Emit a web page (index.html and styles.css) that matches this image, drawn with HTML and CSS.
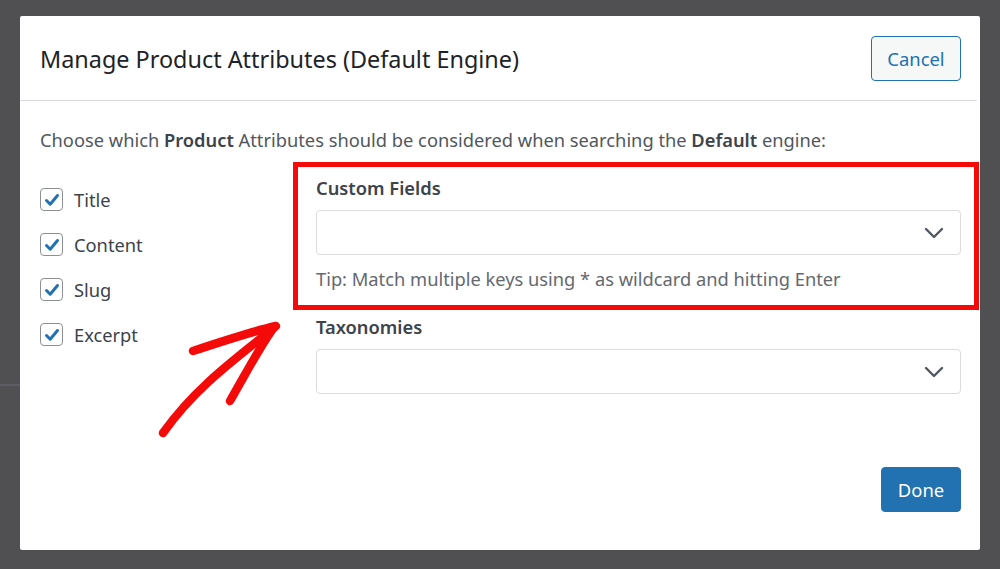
FILE: index.html
```html
<!DOCTYPE html>
<html>
<head>
<meta charset="utf-8">
<link rel="stylesheet" href="styles.css">
</head>
<body>
<div class="backdrop-line"></div>
<div class="modal">
  <div class="modal-header">
    <h1 class="modal-title">Manage Product Attributes (Default Engine)</h1>
    <button class="btn btn-secondary">Cancel</button>
  </div>
  <div class="modal-body">
    <p class="intro">Choose which <strong>Product</strong> Attributes should be considered when searching the <strong>Default</strong> engine:</p>
    <div class="columns">
      <ul class="checks">
        <li><span class="cb"><svg viewBox="0 0 20 20" width="20" height="20"><path d="M4.5 10.5 L8.2 14.2 L15.5 5.5" fill="none" stroke="#2271b1" stroke-width="3" stroke-linecap="round" stroke-linejoin="round"/></svg></span>Title</li>
        <li><span class="cb"><svg viewBox="0 0 20 20" width="20" height="20"><path d="M4.5 10.5 L8.2 14.2 L15.5 5.5" fill="none" stroke="#2271b1" stroke-width="3" stroke-linecap="round" stroke-linejoin="round"/></svg></span>Content</li>
        <li><span class="cb"><svg viewBox="0 0 20 20" width="20" height="20"><path d="M4.5 10.5 L8.2 14.2 L15.5 5.5" fill="none" stroke="#2271b1" stroke-width="3" stroke-linecap="round" stroke-linejoin="round"/></svg></span>Slug</li>
        <li><span class="cb"><svg viewBox="0 0 20 20" width="20" height="20"><path d="M4.5 10.5 L8.2 14.2 L15.5 5.5" fill="none" stroke="#2271b1" stroke-width="3" stroke-linecap="round" stroke-linejoin="round"/></svg></span>Excerpt</li>
      </ul>
      <div class="fields">
        <div class="field">
          <label class="field-label">Custom Fields</label>
          <div class="select"><svg class="chev" viewBox="0 0 20 12" width="20" height="12"><path d="M2 2 L10 10 L18 2" fill="none" stroke="#50575e" stroke-width="2.4" stroke-linecap="round" stroke-linejoin="round"/></svg></div>
          <p class="tip">Tip: Match multiple keys using * as wildcard and hitting Enter</p>
        </div>
        <div class="field">
          <label class="field-label">Taxonomies</label>
          <div class="select"><svg class="chev" viewBox="0 0 20 12" width="20" height="12"><path d="M2 2 L10 10 L18 2" fill="none" stroke="#50575e" stroke-width="2.4" stroke-linecap="round" stroke-linejoin="round"/></svg></div>
        </div>
      </div>
    </div>
  </div>
  <div class="modal-footer">
    <button class="btn btn-primary">Done</button>
  </div>
  <div class="highlight"></div>
  <svg class="arrow" viewBox="0 0 1000 569" width="1000" height="569">
    <g fill="none" stroke="#f50a0a" stroke-width="8.5" stroke-linecap="round" stroke-linejoin="round">
      <path d="M163 433 C 190 395, 220 370, 274 328"/>
      <path d="M193 351 C 220 342, 250 332, 276 326"/>
      <path d="M230 401 C 245 375, 258 350, 272 330"/>
    </g>
  </svg>
</div>
</body>
</html>
```
FILE: styles.css
```css
* { box-sizing: border-box; }
html, body { margin: 0; padding: 0; }
body {
  background: #505052;
  width: 1000px;
  height: 569px;
  overflow: hidden;
  font-family: "Noto Sans", "Open Sans", sans-serif;
  padding: 16px 20px 0 20px;
  position: relative;
}
.backdrop-line {
  position: absolute;
  left: 0;
  top: 384px;
  width: 20px;
  height: 2px;
  background: #5c5e66;
}
.modal {
  position: relative;
  background: #fff;
  width: 960px;
  height: 534px;
  border-radius: 2px;
}
.modal-header {
  display: flex;
  align-items: center;
  justify-content: space-between;
  height: 85px;
  padding: 0 16px 0 20px;
  border-bottom: 1px solid #dcdcde;
  margin-right: 3px;
}
.modal-title {
  margin: 0;
  font-size: 23.4px;
  font-weight: 400;
  color: #1d2327;
  line-height: 30px;
  margin-top: 2px;
}
.btn {
  font-family: inherit;
  font-size: 18.4px;
  border-radius: 4px;
  height: 45px;
  cursor: pointer;
  padding: 0;
}
.btn-secondary {
  width: 90px;
  background: #f6f7f7;
  border: 1px solid #2271b1;
  color: #2271b1;
}
.btn-primary {
  width: 80px;
  background: #2271b1;
  border: 1px solid #2271b1;
  color: #fff;
}
.modal-body {
  padding: 22px 19px 0 20px;
}
.intro {
  margin: 0;
  font-size: 18.3px;
  color: #50575e;
  line-height: 34px;
}
.intro strong {
  color: #3c434a;
  font-weight: 600;
}
.columns {
  display: flex;
  margin-top: 12px;
}
.checks {
  list-style: none;
  margin: 0;
  padding: 0;
  width: 276px;
  padding-top: 8px;
}
.checks li {
  display: flex;
  align-items: center;
  height: 45px;
  font-size: 18.3px;
  color: #3c434a;
}
.cb {
  width: 23px;
  height: 23px;
  border: 1px solid #8c8f94;
  border-radius: 4px;
  display: flex;
  align-items: center;
  justify-content: center;
  margin-right: 11px;
  background: #fff;
}
.fields {
  flex: 1;
}
.field-label {
  display: block;
  font-size: 18.3px;
  font-weight: 600;
  color: #3c434a;
  line-height: 24px;
  margin-top: 7px;
}
.select {
  margin-top: 10px;
  height: 45px;
  border: 1px solid #dcdcde;
  border-radius: 4px;
  display: flex;
  align-items: center;
  justify-content: flex-end;
  padding-right: 16px;
}
.tip {
  margin: 12px 0 0 0;
  font-size: 18.3px;
  color: #646970;
  line-height: 24px;
}
.field + .field {
  margin-top: 24px;
}
.field + .field .field-label { margin-top: 0; }
.modal-footer {
  position: absolute;
  right: 19px;
  bottom: 38px;
  display: flex;
  justify-content: flex-end;
}
.highlight {
  position: absolute;
  left: 273px;
  top: 146px;
  width: 686px;
  height: 148px;
  border: 5px solid #f50a0a;
}
.arrow {
  position: absolute;
  left: -20px;
  top: -16px;
  pointer-events: none;
}
```
